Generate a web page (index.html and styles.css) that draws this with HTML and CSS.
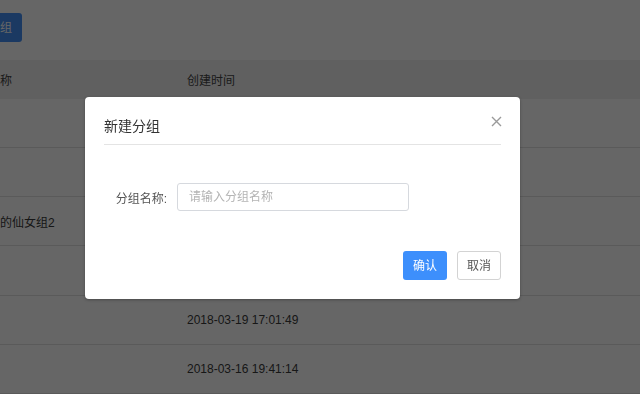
FILE: index.html
```html
<!DOCTYPE html>
<html lang="zh-CN">
<head>
<meta charset="utf-8">
<title>分组管理</title>
<link rel="stylesheet" href="styles.css">
</head>
<body>
<div class="page">
  <div class="toolbar">
    <button class="btn btn-page">新建分组</button>
  </div>
  <div class="table">
    <div class="row thead">
      <div class="cell c1">分组名称</div>
      <div class="cell c2">创建时间</div>
    </div>
    <div class="row">
      <div class="cell c1">默认</div>
      <div class="cell c2">2018-03-22 10:12:35</div>
    </div>
    <div class="row">
      <div class="cell c1">测试</div>
      <div class="cell c2">2018-03-21 15:48:02</div>
    </div>
    <div class="row">
      <div class="cell c1">小可爱的仙女组2</div>
      <div class="cell c2">2018-03-20 11:26:53</div>
    </div>
    <div class="row">
      <div class="cell c1">同事</div>
      <div class="cell c2">2018-03-20 09:05:17</div>
    </div>
    <div class="row">
      <div class="cell c1">家人</div>
      <div class="cell c2">2018-03-19 17:01:49</div>
    </div>
    <div class="row">
      <div class="cell c1">朋友</div>
      <div class="cell c2">2018-03-16 19:41:14</div>
    </div>
  </div>
</div>

<div class="mask"></div>

<div class="dialog">
  <div class="dialog-header">
    <span class="dialog-title">新建分组</span>
    <button class="dialog-close" aria-label="关闭">
      <svg width="11" height="11" viewBox="0 0 11 11"><path d="M1 1 L10 10 M10 1 L1 10" stroke="#9a9a9a" stroke-width="1.4" fill="none"/></svg>
    </button>
  </div>
  <div class="dialog-body">
    <div class="form-item">
      <label class="form-label">分组名称:</label>
      <input class="form-input" type="text" placeholder="请输入分组名称">
    </div>
  </div>
  <div class="dialog-footer">
    <button class="btn btn-primary">确认</button>
    <button class="btn btn-default">取消</button>
  </div>
</div>
</body>
</html>
```

FILE: styles.css
```css
* { box-sizing: border-box; }

html, body {
  margin: 0;
  padding: 0;
  width: 640px;
  height: 394px;
  overflow: hidden;
  background: #fff;
  font-family: "Liberation Sans", "Noto Sans CJK SC", sans-serif;
  font-size: 12px;
}

.page {
  margin-left: -46px;
  width: 720px;
}

.toolbar {
  height: 60px;
  padding-top: 13px;
}

.btn {
  font-family: inherit;
  font-size: 12px;
  line-height: 1;
  border-radius: 3px;
  cursor: pointer;
  padding: 0 10px;
}

.btn-page {
  height: 29px;
  background: #4490f5;
  color: #fff;
  border: none;
}

.table {
  color: #3a3a3a;
}

.row {
  display: flex;
  align-items: center;
  height: 49px;
  border-bottom: 1px solid #e2e2e2;
}

.row:nth-child(5) {
  height: 50px;
}

.row.thead {
  height: 39px;
  background: #f0f0f0;
  border-bottom: none;
  color: #444;
}

.cell {
  padding-left: 10px;
  white-space: nowrap;
}

.c1 { width: 223px; }
.c2 { flex: 1; }

.mask {
  position: fixed;
  inset: 0;
  background: rgba(0, 0, 0, 0.6);
}

.dialog {
  position: absolute;
  left: 85px;
  top: 97px;
  width: 435px;
  height: 202px;
  background: #fff;
  border-radius: 4px;
  box-shadow: 0 1px 3px rgba(0, 0, 0, 0.3);
}

.dialog-header {
  position: relative;
  margin: 0 19px;
  padding: 20px 0 9px;
  border-bottom: 1px solid #e4e4e4;
}

.dialog-title {
  display: block;
  font-size: 14px;
  line-height: 18px;
  color: #333;
}

.dialog-close {
  position: absolute;
  top: 19px;
  right: -1px;
  width: 11px;
  height: 11px;
  padding: 0;
  border: none;
  background: none;
  display: flex;
}

.dialog-body {
  padding: 38px 19px 0;
}

.form-item {
  display: flex;
  align-items: center;
  height: 28px;
}

.form-label {
  width: 73px;
  padding-right: 10px;
  text-align: right;
  color: #555;
}

.form-input {
  width: 232px;
  height: 28px;
  border: 1px solid #d6d9de;
  border-radius: 3px;
  padding: 0 0 0 11px;
  font-family: inherit;
  font-size: 12px;
  color: #333;
  outline: none;
}

.form-input::placeholder {
  color: #b4b4b4;
}

.dialog-footer {
  display: flex;
  justify-content: flex-end;
  gap: 10px;
  padding: 40px 19px 19px;
}

.dialog-footer .btn {
  height: 29px;
  width: 44px;
  padding: 0;
}

.btn-primary {
  background: #3d8ffc;
  color: #fff;
  border: none;
}

.btn-default {
  background: #fff;
  color: #555;
  border: 1px solid #d3d3d3;
}
```
